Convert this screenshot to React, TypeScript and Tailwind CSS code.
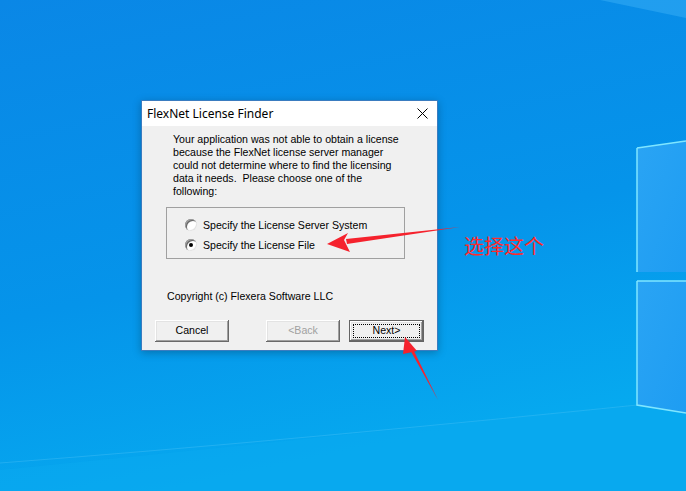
import React from 'react';

const bevel =
  'shadow-[inset_-1px_-1px_#696969,inset_1px_1px_#ffffff,inset_-2px_-2px_#a0a0a0,inset_2px_2px_#e3e3e3]';

function Radio({ checked }: { checked?: boolean }) {
  return (
    <span className="relative inline-flex h-[12px] w-[12px] items-center justify-center rounded-full bg-white shadow-[inset_1px_1px_#a0a0a0,inset_-1px_-1px_#e3e3e3,inset_2px_2px_#696969]">
      {checked && <span className="h-[4px] w-[4px] rounded-full bg-black" />}
    </span>
  );
}

function Wallpaper() {
  return (
    <svg className="absolute inset-0" width="686" height="491" viewBox="0 0 686 491">
      <defs>
        <linearGradient id="bg" x1="0" y1="0" x2="0.3" y2="1">
          <stop offset="0" stopColor="#0a87e6" />
          <stop offset="0.6" stopColor="#0594ea" />
          <stop offset="1" stopColor="#06a9ef" />
        </linearGradient>
        <linearGradient id="pane" x1="0" y1="0" x2="1" y2="1">
          <stop offset="0" stopColor="#2aa4f4" />
          <stop offset="1" stopColor="#1e9df2" />
        </linearGradient>
      </defs>
      <rect width="686" height="491" fill="url(#bg)" />
      <path d="M0 470 L686 400 L686 491 L0 491 Z" fill="#0aaaf0" opacity="0.5" />
      <path d="M0 463 Q300 440 686 400" stroke="#5fcaf8" strokeWidth="1" fill="none" opacity="0.3" />
      <path d="M600 0 L686 0 L686 18 Z" fill="#3ab0f5" opacity="0.5" />
      <path d="M637 148 L686 141 L686 272 L637 272 Z" fill="url(#pane)" />
      <path d="M637 281 L686 281 L686 413 L637 405 Z" fill="url(#pane)" />
      <path d="M637 148 L686 141 M637 148 L637 272" stroke="#7fe6ff" strokeWidth="1.5" fill="none" />
      <path d="M637 281 L686 281 M637 281 L637 405 L686 413" stroke="#7fe6ff" strokeWidth="1.5" fill="none" />
    </svg>
  );
}

export default function App() {
  return (
    <div className="relative h-[491px] w-[686px] overflow-hidden font-['Liberation_Sans',Arial,sans-serif]">
      <Wallpaper />

      {/* dialog window */}
      <div className="absolute left-[141px] top-[100px] flex h-[251px] w-[297px] flex-col border border-[#3a7cc0] bg-[#f0f0f0] shadow-[0_2px_8px_rgba(0,0,0,0.25)]">
        <div className="flex h-[25px] items-center justify-between bg-white pl-[5px] pr-[9px]">
          <span className="font-['Noto_Sans',sans-serif] text-[12px] text-black">FlexNet License Finder</span>
          <svg width="11" height="11" viewBox="0 0 11 11">
            <path d="M0.5 0.5 L10.5 10.5 M10.5 0.5 L0.5 10.5" stroke="#000" strokeWidth="1" />
          </svg>
        </div>

        <div className="flex flex-1 flex-col text-[10.6px]">
          <p className="ml-[31px] mt-[7px] leading-[13px] text-black">
            Your application was not able to obtain a license
            <br />
            because the FlexNet license server manager
            <br />
            could not determine where to find the licensing
            <br />
            data it needs.&nbsp; Please choose one of the
            <br />
            following:
          </p>

          <div className="ml-[24px] mt-[9px] flex h-[52px] w-[239px] flex-col justify-center gap-[7px] border border-[#a0a0a0] pl-[18px] pt-[4px]">
            <label className="flex items-center gap-[6px] leading-[13px] text-black">
              <Radio />
              Specify the License Server System
            </label>
            <label className="flex items-center gap-[6px] leading-[13px] text-black">
              <Radio checked />
              Specify the License File
            </label>
          </div>

          <p className="ml-[25px] mt-[31px] leading-[13px] text-black">
            Copyright (c) Flexera Software LLC
          </p>

          <div className="ml-[13px] mt-[17px] flex items-center">
            <button className={`h-[22px] w-[74px] bg-[#f0f0f0] text-black ${bevel}`}>Cancel</button>
            <button className={`ml-[37px] h-[22px] w-[74px] bg-[#f0f0f0] text-[#a0a0a0] ${bevel}`}>&lt;Back</button>
            <button className="ml-[9px] h-[22px] w-[75px] border border-[#646464] bg-[#f0f0f0] p-0">
              <span className={`flex h-full w-full items-center justify-center p-[3px] ${bevel}`}>
                <span className="flex h-full w-full items-center justify-center border border-dotted border-black text-black">
                  Next&gt;
                </span>
              </span>
            </button>
          </div>
        </div>
      </div>

      {/* annotations */}
      <svg className="absolute inset-0" width="686" height="491" viewBox="0 0 686 491">
        <path d="M460 227 L346 239 L347 244 Z" fill="#f5222d" />
        <path d="M327 244 L348 233 L344 240 L350 252 Z" fill="#f5222d" />
        <path d="M438 400 L409 348 L412 347 Z" fill="#f5222d" />
        <path d="M405 337 L417 351 L403 354 Z" fill="#f5222d" />
      </svg>
      <span className="absolute left-[464px] top-[233px] font-['Noto_Sans_CJK_SC',sans-serif] text-[20px] leading-[26px] text-[#ff2a2a]">
        选择这个
      </span>
    </div>
  );
}
